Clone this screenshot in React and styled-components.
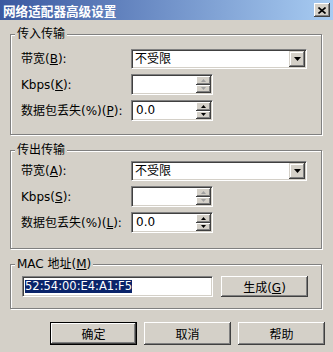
import styled, { createGlobalStyle } from "styled-components";

const GlobalStyle = createGlobalStyle`
  body {
    margin:0;
    background:#d4d0c8;
  }
`

const Dialog = styled.div`
  width:333px;
  height:352px;
  background:#d4d0c8;
  display:flex;
  flex-direction:column;
  overflow:hidden;
  font-family:"DejaVu Sans","Noto Sans CJK SC",sans-serif;
  font-size:12px;
  color:#000;
`

const TitleBar = styled.div`
  height:20px;
  flex:none;
  display:flex;
  align-items:center;
  justify-content:space-between;
  padding:0 3px;
  background:linear-gradient(to right,#3a58a0,#a8ccf2);
  color:#fff;
  font-family:"Noto Sans CJK SC",sans-serif;
  font-weight:bold;
  font-size:12.6px;
`

const CloseButton = styled.div`
  width:16px;
  height:14px;
  box-sizing:border-box;
  display:flex;
  align-items:center;
  justify-content:center;
  background:#d4d0c8;
  box-shadow:inset -1px -1px #404040, inset 1px 1px #fff, inset -2px -2px #808080;
`

const Body = styled.div`
  padding:7px 11px 0 10px;
  display:flex;
  flex-direction:column;
`

const Group = styled.fieldset`
  margin:${p => p.$mt || 0}px 0 0;
  padding:${p => p.$pt}px 10px ${p => p.$pb}px;
  border:1px solid #808080;
  box-shadow:1px 1px 0 #fff, inset 1px 1px 0 #fff;
  min-width:0;
`

const Legend = styled.legend`
  padding:0 2px;
  margin-left:-6px;
  line-height:14px;
  background:#d4d0c8;
`

const Rows = styled.div`
  display:flex;
  flex-direction:column;
  gap:5px;
`

const Row = styled.div`
  display:grid;
  grid-template-columns:110px auto;
  align-items:center;
  height:21px;
`

const Label = styled.span`
  white-space:nowrap;
  line-height:14px;
`

const sunken = `
  box-sizing:border-box;
  border-style:solid;
  border-width:1px;
  border-color:#808080 #fff #fff #808080;
  box-shadow:inset 1px 1px #404040, inset -1px -1px #d4d0c8;
  background:#fff;
`

const SelectBox = styled.div`
  ${sunken}
  width:176px;
  height:20px;
  padding:1px;
  display:flex;
  align-items:center;
`

const SelectText = styled.span`
  flex:1;
  padding-left:2px;
  line-height:14px;
`

const DropButton = styled.div`
  width:16px;
  height:16px;
  box-sizing:border-box;
  display:flex;
  align-items:center;
  justify-content:center;
  background:#d4d0c8;
  box-shadow:inset -1px -1px #404040, inset 1px 1px #d4d0c8, inset -2px -2px #808080, inset 2px 2px #fff;
`

const Spinner = styled.div`
  ${sunken}
  width:82px;
  height:21px;
  padding:1px;
  display:flex;
`

const SpinText = styled.span`
  flex:1;
  padding-left:3px;
  line-height:17px;
`

const SpinButtons = styled.div`
  width:15px;
  display:flex;
  flex-direction:column;
`

const SpinButton = styled.div`
  flex:1;
  display:flex;
  align-items:center;
  justify-content:center;
  background:#d4d0c8;
  box-shadow:inset -1px -1px #404040, inset 1px 1px #fff, inset -2px -2px #808080;
`

const MacRow = styled.div`
  display:flex;
  gap:8px;
  padding-left:1px;
`

const MacInput = styled.div`
  ${sunken}
  width:191px;
  height:21px;
  padding:0 2px;
  display:flex;
  align-items:center;
`

const Selected = styled.span`
  background:#0a246a;
  color:#fff;
  line-height:13px;
  font-size:11.5px;
`

const Button = styled.button`
  width:87px;
  height:${p => p.$h || 23}px;
  padding:0;
  border:none;
  background:#d4d0c8;
  font:inherit;
  color:#000;
  box-shadow:${p => p.$default
    ? "inset 0 0 0 1px #000, inset -2px -2px #404040, inset 2px 2px #fff, inset -3px -3px #808080"
    : "inset -1px -1px #404040, inset 1px 1px #fff, inset -2px -2px #808080"};
`

const Footer = styled.div`
  display:flex;
  justify-content:flex-end;
  gap:7px;
  padding:13px 8px 0 0;
`

const Arrow = ({ up, color = "#000", w = 5, h = 3 }) => (
  <svg width={w} height={h} viewBox={`0 0 ${w} ${h}`}>
    <polygon
      points={up ? `0,${h} ${w},${h} ${w / 2},0` : `0,0 ${w},0 ${w / 2},${h}`}
      fill={color}
    />
  </svg>
)

const Spin = ({ value = "", disabled }) => {
  const c = disabled ? "#a0a0a0" : "#000"
  return (
    <Spinner>
      <SpinText>{value}</SpinText>
      <SpinButtons>
        <SpinButton><Arrow up color={c} /></SpinButton>
        <SpinButton><Arrow color={c} /></SpinButton>
      </SpinButtons>
    </Spinner>
  )
}

const TransferGroup = ({ title, keys, mt, pt, pb }) => (
  <Group $mt={mt} $pt={pt} $pb={pb}>
    <Legend>{title}</Legend>
    <Rows>
      <Row>
        <Label>带宽(<u>{keys[0]}</u>):</Label>
        <SelectBox>
          <SelectText>不受限</SelectText>
          <DropButton><Arrow w={7} h={4} /></DropButton>
        </SelectBox>
      </Row>
      <Row>
        <Label>Kbps(<u>{keys[1]}</u>):</Label>
        <Spin disabled />
      </Row>
      <Row>
        <Label>数据包丢失(%)(<u>{keys[2]}</u>):</Label>
        <Spin value="0.0" />
      </Row>
    </Rows>
  </Group>
)

const App = () => {
  return (
    <>
      <GlobalStyle />
      <Dialog>
        <TitleBar>
          <span>网络适配器高级设置</span>
          <CloseButton>
            <svg width="8" height="7" viewBox="0 0 8 7">
              <path d="M0.5 0.5 L7.5 6.5 M7.5 0.5 L0.5 6.5" stroke="#000" strokeWidth="1.6" />
            </svg>
          </CloseButton>
        </TitleBar>

        <Body>
          <TransferGroup title="传入传输" keys={["B", "K", "P"]} pt={7} pb={13} />
          <TransferGroup title="传出传输" keys={["A", "S", "L"]} mt={8} pt={3} pb={15} />

          <Group $mt={8} $pt={5} $pb={11}>
            <Legend>MAC 地址(<u>M</u>)</Legend>
            <MacRow>
              <MacInput><Selected>52:54:00:E4:A1:F5</Selected></MacInput>
              <Button $h={21}>生成(<u>G</u>)</Button>
            </MacRow>
          </Group>
        </Body>

        <Footer>
          <Button $default>确定</Button>
          <Button>取消</Button>
          <Button>帮助</Button>
        </Footer>
      </Dialog>
    </>
  )
}

export default App
